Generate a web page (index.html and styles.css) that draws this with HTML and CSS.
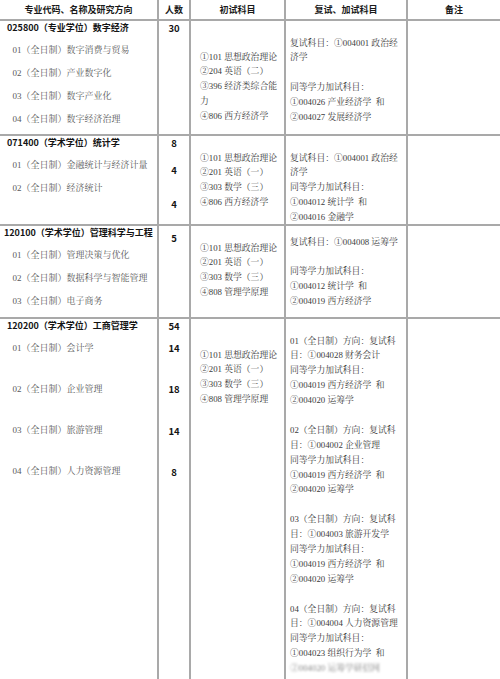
FILE: index.html
```html
<!DOCTYPE html>
<html lang="zh-CN">
<head>
<meta charset="utf-8">
<title>招生专业目录</title>
<link rel="stylesheet" href="styles.css">
</head>
<body>
<div class="plan">
  <div class="row head">
    <div class="cell">专业代码、名称及研究方向</div>
    <div class="cell">人数</div>
    <div class="cell">初试科目</div>
    <div class="cell">复试、加试科目</div>
    <div class="cell">备注</div>
  </div>

  <div class="row r1">
    <div class="cell major">
      <div class="title">025800（专业学位）数字经济</div>
      <div class="subs">
        <div class="sub">01（全日制）数字消费与贸易</div>
        <div class="sub">02（全日制）产业数字化</div>
        <div class="sub">03（全日制）数字产业化</div>
        <div class="sub">04（全日制）数字经济治理</div>
      </div>
    </div>
    <div class="cell count">
      <div class="num">30</div>
    </div>
    <div class="cell text pt-28">
      <div class="line">①101 思想政治理论</div>
      <div class="line">②204 英语（二）</div>
      <div class="line">③396 经济类综合能</div>
      <div class="line">力</div>
      <div class="line">④806 西方经济学</div>
    </div>
    <div class="cell text retest pt-14">
      <div class="line">复试科目：①004001 政治经</div>
      <div class="line">济学</div>
      <div class="line blank"></div>
      <div class="line">同等学力加试科目：</div>
      <div class="line">①004026 产业经济学&nbsp; 和</div>
      <div class="line">②004027 发展经济学</div>
    </div>
    <div class="cell"></div>
  </div>

  <div class="row r2">
    <div class="cell major">
      <div class="title">071400（学术学位）统计学</div>
      <div class="subs">
        <div class="sub">01（全日制）金融统计与经济计量</div>
        <div class="sub">02（全日制）经济统计</div>
      </div>
    </div>
    <div class="cell count">
      <div class="num">8</div>
      <div class="num gap-13">4</div>
      <div class="num gap-20">4</div>
    </div>
    <div class="cell text pt-14">
      <div class="line">①101 思想政治理论</div>
      <div class="line">②201 英语（一）</div>
      <div class="line">③303 数学（三）</div>
      <div class="line">④806 西方经济学</div>
    </div>
    <div class="cell text retest pt-14">
      <div class="line">复试科目：①004001 政治经</div>
      <div class="line">济学</div>
      <div class="line">同等学力加试科目：</div>
      <div class="line">①004012 统计学&nbsp; 和</div>
      <div class="line">②004016 金融学</div>
    </div>
    <div class="cell"></div>
  </div>

  <div class="row r3">
    <div class="cell major">
      <div class="title tight">120100（学术学位）管理科学与工程</div>
      <div class="subs">
        <div class="sub">01（全日制）管理决策与优化</div>
        <div class="sub">02（全日制）数据科学与智能管理</div>
        <div class="sub">03（全日制）电子商务</div>
      </div>
    </div>
    <div class="cell count">
      <div class="num gap-5">5</div>
    </div>
    <div class="cell text pt-14">
      <div class="line">①101 思想政治理论</div>
      <div class="line">②201 英语（一）</div>
      <div class="line">③303 数学（三）</div>
      <div class="line">④808 管理学原理</div>
    </div>
    <div class="cell text retest pt-8">
      <div class="line">复试科目：①004008 运筹学</div>
      <div class="line blank"></div>
      <div class="line">同等学力加试科目：</div>
      <div class="line">①004012 统计学&nbsp; 和</div>
      <div class="line">②004019 西方经济学</div>
    </div>
    <div class="cell"></div>
  </div>

  <div class="row r4">
    <div class="cell major">
      <div class="title">120200（学术学位）工商管理学</div>
      <div class="subs loose">
        <div class="sub">01（全日制）会计学</div>
        <div class="sub">02（全日制）企业管理</div>
        <div class="sub">03（全日制）旅游管理</div>
        <div class="sub">04（全日制）人力资源管理</div>
      </div>
    </div>
    <div class="cell count">
      <div class="num">54</div>
      <div class="num gap-8">14</div>
      <div class="num gap-27">18</div>
      <div class="num gap-27">14</div>
      <div class="num gap-27">8</div>
    </div>
    <div class="cell text pt-28">
      <div class="line">①101 思想政治理论</div>
      <div class="line">②201 英语（一）</div>
      <div class="line">③303 数学（三）</div>
      <div class="line">④808 管理学原理</div>
    </div>
    <div class="cell text retest pt-14">
      <div class="line">01（全日制）方向：复试科</div>
      <div class="line">目：①004028 财务会计</div>
      <div class="line">同等学力加试科目：</div>
      <div class="line">①004019 西方经济学&nbsp; 和</div>
      <div class="line">②004020 运筹学</div>
      <div class="line blank"></div>
      <div class="line">02（全日制）方向：复试科</div>
      <div class="line">目：①004002 企业管理</div>
      <div class="line">同等学力加试科目：</div>
      <div class="line">①004019 西方经济学&nbsp; 和</div>
      <div class="line">②004020 运筹学</div>
      <div class="line blank"></div>
      <div class="line">03（全日制）方向：复试科</div>
      <div class="line">目：①004003 旅游开发学</div>
      <div class="line">同等学力加试科目：</div>
      <div class="line">①004019 西方经济学&nbsp; 和</div>
      <div class="line">②004020 运筹学</div>
      <div class="line blank"></div>
      <div class="line">04（全日制）方向：复试科</div>
      <div class="line">目：①004004 人力资源管理</div>
      <div class="line">同等学力加试科目：</div>
      <div class="line">①004023 组织行为学&nbsp; 和</div>
      <div class="line"><span class="watermark">②004020 运筹学研招网</span></div>
    </div>
    <div class="cell"></div>
  </div>
</div>
</body>
</html>
```

FILE: styles.css
```css
* {
  box-sizing: border-box;
}

html, body {
  margin: 0;
  padding: 0;
  background: #ffffff;
}

body {
  width: 500px;
  height: 679px;
  overflow: hidden;
  font-family: "Liberation Serif", "Noto Serif CJK SC", "Noto Sans CJK SC", serif;
  color: #3a3a3a;
}

.plan {
  width: 500px;
}

.row {
  display: grid;
  grid-template-columns: 157px 32px 95px 122px 94px;
  border-bottom: 2px solid #a9a9a9;
}

.cell {
  border-left: 2px solid #a9a9a9;
  min-width: 0;
}

.cell:first-child {
  border-left: none;
}

.head {
  height: 21px;
}

.head .cell {
  font-family: "Noto Sans CJK SC", sans-serif;
  font-weight: 700;
  font-size: 9px;
  line-height: 19px;
  text-align: center;
  color: #1a1a1a;
}

.r1 { height: 115px; }
.r2 { height: 90px; }
.r3 { height: 93px; }
.r4 { height: 360px; border-bottom: none; overflow: hidden; }

.major {
  padding-left: 7px;
  white-space: nowrap;
}

.title {
  font-family: "Noto Sans CJK SC", sans-serif;
  font-weight: 700;
  font-size: 9px;
  line-height: 14px;
  color: #141414;
}

.title.tight {
  margin-left: -3px;
}

.subs {
  margin-top: 3.5px;
  padding-left: 5.5px;
}

.sub {
  font-size: 9px;
  line-height: 23px;
  color: #5a5a5a;
}

.subs.loose .sub + .sub {
  margin-top: 18.3px;
}

.count {
  text-align: center;
}

.num {
  font-family: "Noto Sans CJK SC", sans-serif;
  font-weight: 700;
  font-size: 9.5px;
  line-height: 14px;
  color: #141414;
}

.gap-5 { margin-top: 5px; }
.gap-8 { margin-top: 8px; }
.gap-13 { margin-top: 13px; }
.gap-20 { margin-top: 20px; }
.gap-27 { margin-top: 27.3px; }

.text {
  padding-left: 9px;
  white-space: nowrap;
  font-size: 8.8px;
  color: #3c3c3c;
}

.retest {
  padding-left: 4px;
}

.line {
  line-height: 14.9px;
  height: 14.9px;
}

.pt-8 { padding-top: 8.5px; }
.pt-14 { padding-top: 14.5px; }
.pt-28 { padding-top: 28.5px; }

.watermark {
  color: #8a8a8a;
  filter: blur(0.9px);
}
```
